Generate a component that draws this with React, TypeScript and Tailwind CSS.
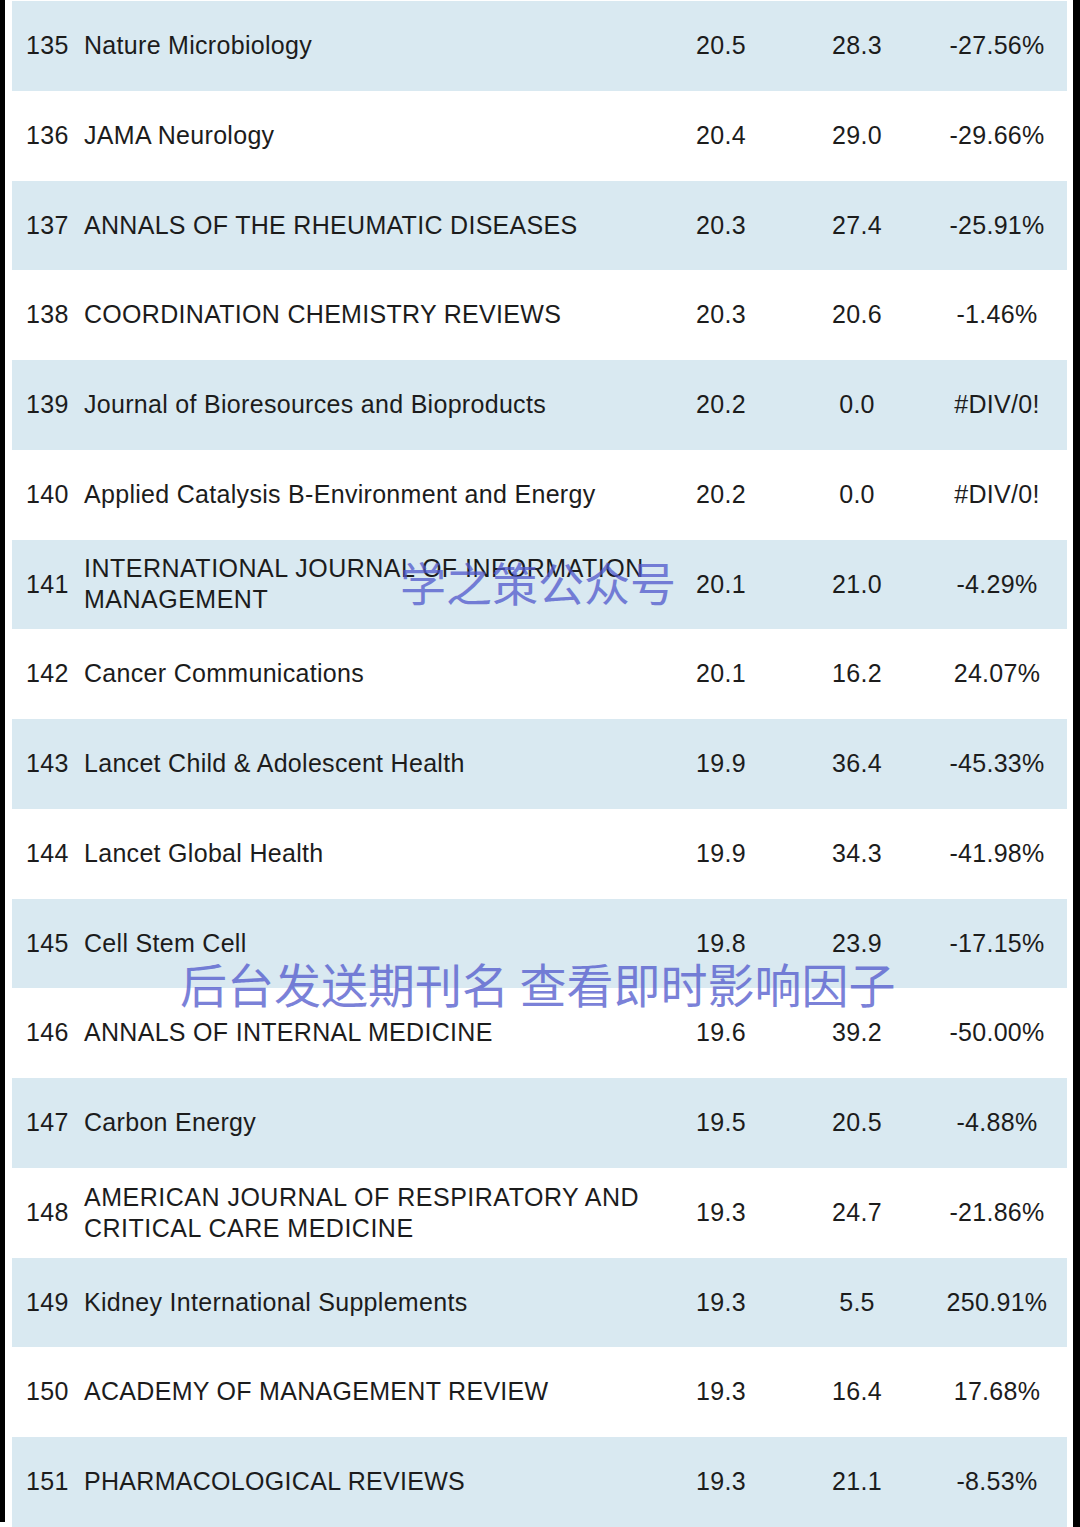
const rows: [string, string[], string, string, string][] = [
  ['135', ['Nature Microbiology'], '20.5', '28.3', '-27.56%'],
  ['136', ['JAMA Neurology'], '20.4', '29.0', '-29.66%'],
  ['137', ['ANNALS OF THE RHEUMATIC DISEASES'], '20.3', '27.4', '-25.91%'],
  ['138', ['COORDINATION CHEMISTRY REVIEWS'], '20.3', '20.6', '-1.46%'],
  ['139', ['Journal of Bioresources and Bioproducts'], '20.2', '0.0', '#DIV/0!'],
  ['140', ['Applied Catalysis B-Environment and Energy'], '20.2', '0.0', '#DIV/0!'],
  ['141', ['INTERNATIONAL JOURNAL OF INFORMATION', 'MANAGEMENT'], '20.1', '21.0', '-4.29%'],
  ['142', ['Cancer Communications'], '20.1', '16.2', '24.07%'],
  ['143', ['Lancet Child & Adolescent Health'], '19.9', '36.4', '-45.33%'],
  ['144', ['Lancet Global Health'], '19.9', '34.3', '-41.98%'],
  ['145', ['Cell Stem Cell'], '19.8', '23.9', '-17.15%'],
  ['146', ['ANNALS OF INTERNAL MEDICINE'], '19.6', '39.2', '-50.00%'],
  ['147', ['Carbon Energy'], '19.5', '20.5', '-4.88%'],
  ['148', ['AMERICAN JOURNAL OF RESPIRATORY AND', 'CRITICAL CARE MEDICINE'], '19.3', '24.7', '-21.86%'],
  ['149', ['Kidney International Supplements'], '19.3', '5.5', '250.91%'],
  ['150', ['ACADEMY OF MANAGEMENT REVIEW'], '19.3', '16.4', '17.68%'],
  ['151', ['PHARMACOLOGICAL REVIEWS'], '19.3', '21.1', '-8.53%'],
];

export default function App() {
  return (
    <div
      className="relative flex w-[1080px] h-[1527px] bg-white text-[#1c1c1c] overflow-hidden"
      style={{ fontFamily: '"Liberation Sans", Arial, sans-serif' }}
    >
      <div className="w-[5px] h-[1522px] bg-black" />
      <div className="w-[7px]" />
      <div className="w-[1055px] pt-[1px]">
        {rows.map(([rank, name, a, b, c], i) => (
          <div
            key={rank}
            className={`grid grid-cols-[72px_576px_122px_150px_130px] items-center h-[89.75px] text-[25px] tracking-[0.3px] ${
              i % 2 === 0 ? 'bg-[#d9e9f1]' : 'bg-white'
            }`}
          >
            <div className="pl-[14px]">{rank}</div>
            <div className={name.length > 1 ? 'leading-[31px] tracking-[0.5px]' : ''}>
              {name.map((n) => (
                <div key={n}>{n}</div>
              ))}
            </div>
            <div className="text-center">{a}</div>
            <div className="text-center">{b}</div>
            <div className="text-center">{c}</div>
          </div>
        ))}
      </div>
      <div className="w-[6px]" />
      <div className="w-[7px] bg-black" />

      {/* watermarks */}
      <div
        className="absolute left-[400px] top-[558px] text-[46px] leading-none text-[#5058cc] opacity-75 whitespace-nowrap"
        style={{ fontFamily: '"Noto Sans CJK SC", sans-serif' }}
      >
        学之策公众号
      </div>
      <div
        className="absolute left-[180px] top-[959px] text-[47px] leading-none text-[#5058cc] opacity-75 whitespace-nowrap"
        style={{ fontFamily: '"Noto Sans CJK SC", sans-serif' }}
      >
        后台发送期刊名 查看即时影响因子
      </div>
    </div>
  );
}
